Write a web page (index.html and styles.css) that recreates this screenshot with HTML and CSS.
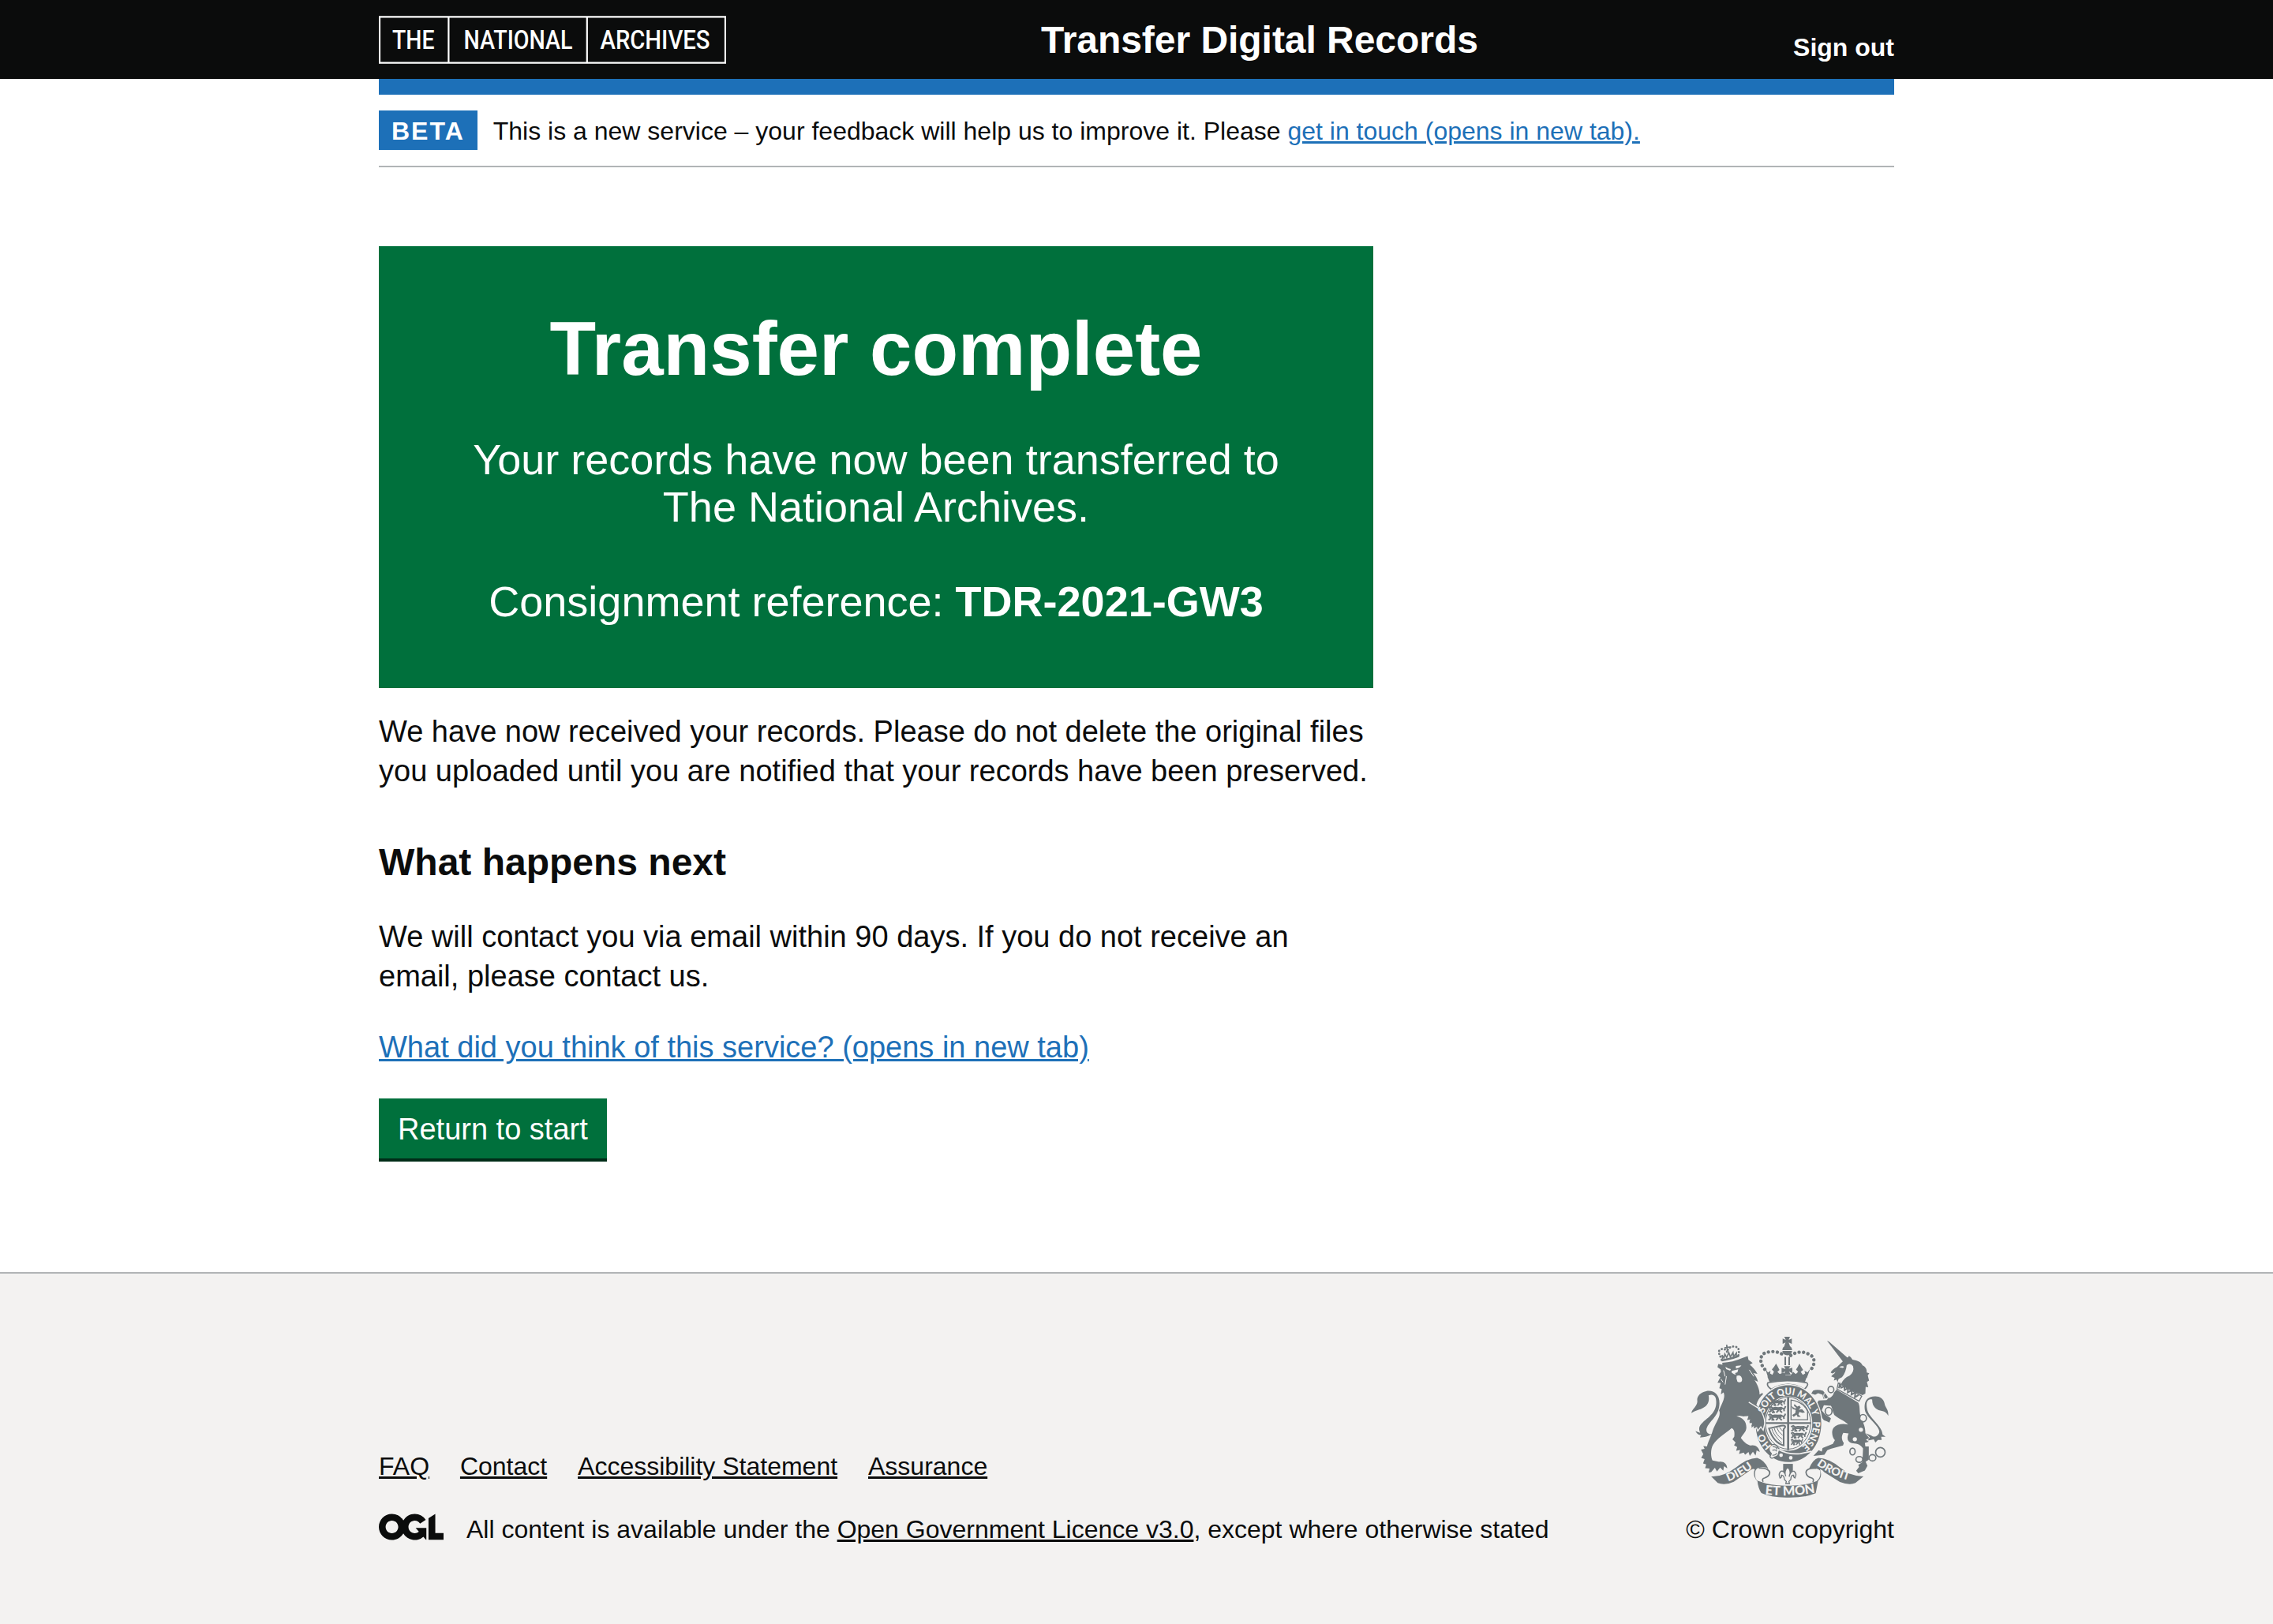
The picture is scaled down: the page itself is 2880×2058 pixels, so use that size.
FILE: index.html
```html
<!DOCTYPE html>
<html lang="en">
<head>
<meta charset="utf-8">
<title>Transfer complete - Transfer Digital Records</title>
<link rel="stylesheet" href="styles.css">
</head>
<body>
<header class="header">
  <div class="container header-row">
    <svg class="tna-logo" viewBox="0 0 440 62" role="img" aria-label="The National Archives">
      <path d="M1 1.4H439V59.7H1ZM88.4 1.4V59.7M263.8 1.4V59.7" fill="none" stroke="#fff" stroke-width="2.2"/>
      <g class="logo-text">
        <text x="17" y="42.2" textLength="53.5" lengthAdjust="spacingAndGlyphs">THE</text>
        <text x="107.5" y="42.2" textLength="138" lengthAdjust="spacingAndGlyphs">NATIONAL</text>
        <text x="280.5" y="42.2" textLength="139" lengthAdjust="spacingAndGlyphs">ARCHIVES</text>
      </g>
    </svg>
    <a class="service-name" href="#">Transfer Digital Records</a>
    <a class="sign-out" href="#">Sign out</a>
  </div>
</header>
<div class="container blue-bar"></div>
<div class="container phase-banner">
  <strong class="tag">BETA</strong>
  <span class="phase-text">This is a new service – your feedback will help us to improve it. Please <a class="link" href="#">get in touch (opens in new tab).</a></span>
</div>
<main class="container main">
  <div class="column">
    <div class="panel">
      <h1>Transfer complete</h1>
      <div class="panel-body">Your records have now been transferred to<br>The National Archives.<br><br>Consignment reference: <strong>TDR-2021-GW3</strong></div>
    </div>
    <p>We have now received your records. Please do not delete the original files you uploaded until you are notified that your records have been preserved.</p>
    <h2>What happens next</h2>
    <p>We will contact you via email within 90 days. If you do not receive an email, please contact us.</p>
    <p><a class="link" href="#">What did you think of this service? (opens in new tab)</a></p>
    <a class="button" href="#">Return to start</a>
  </div>
</main>
<footer class="footer">
  <div class="container footer-row">
    <div class="footer-meta">
      <ul class="footer-links">
        <li><a href="#">FAQ</a></li>
        <li><a href="#">Contact</a></li>
        <li><a href="#">Accessibility Statement</a></li>
        <li><a href="#">Assurance</a></li>
      </ul>
      <div class="licence">
        <svg class="ogl" viewBox="0 0 483.2 195.7"><path fill="currentColor" d="M421.5 142.8V.1l-50.7 32.3v161.1h112.4v-50.7zm-122.3-9.6A47.12 47.12 0 0 1 221 97.8c0-26 21.1-47.1 47.1-47.1 16.7 0 31.4 8.7 39.7 21.8l42.7-27.2A97.63 97.63 0 0 0 268.1 0c-36.5 0-68.3 20.1-85.1 49.7A98 98 0 0 0 97.8 0C43.9 0 0 43.9 0 97.8s43.9 97.8 97.8 97.8c36.5 0 68.3-20.1 85.1-49.7a97.76 97.76 0 0 0 149.6 25.4l19.4 22.2h3v-87.8h-80l24.3 27.5zM97.8 145c-26 0-47.1-21.1-47.1-47.1s21.1-47.1 47.1-47.1 47.1 21.1 47.1 47.1S123.8 145 97.8 145"/></svg>
        <span>All content is available under the <a href="#">Open Government Licence v3.0</a>, except where otherwise stated</span>
      </div>
    </div>
    <div class="copyright">
      <svg class="crest" viewBox="48 30 792 640" aria-hidden="true">
        <defs>
          <path id="garter-left" d="M375 458A97 108 0 0 1 339 385"/>
          <path id="garter-top" d="M346 334C357 289 397 263 437 263C480 263 519 291 532 352"/>
          <path id="garter-right" d="M532 364A96 107 0 0 1 482 465"/>
          <path id="ribbon-left" d="M209 593Q270 570 318 527"/>
          <path id="ribbon-mid" d="M349 642Q437 652 527 638"/>
          <path id="ribbon-right" d="M545 530Q603 573 680 592"/>
          <g id="lions" fill="none" stroke="currentColor" stroke-width="6" stroke-linejoin="round">
            <path d="M2 6l8-4 7 6 10-2 11 1 12-1 10 6 1 8M8 8l3 11-8 5M20 9l-3 8 6 7h-9M34 9l4 9-7 7M48 9l-3 9 8 7M58 14l6-8 2-6M12 13h40"/>
          </g>
        </defs>
        <g fill="currentColor">
          <!-- lion: crown -->
          <g fill="none" stroke="currentColor">
            <path d="M184 130C178 112 166 99 179 91C190 85 202 91 205 101C206 85 222 76 236 80C252 83 251 99 247 116" stroke-width="8" stroke-linecap="round" stroke-dasharray="1 11"/>
            <path d="M184 132Q214 128 249 115" stroke-width="8"/>
            <path d="M203 72l3 26M194 84l20-3M188 127l-3-15 8 10 3-14 7 13 8-19 6 17 10-17 2 15 11-13-1 17" stroke-width="5"/>
          </g>
          <!-- lion: head, mane, body and legs -->
          <path d="M168 158L171 146L187 149L186 141Q226 139 262 123L283 116L286 130L302 142L291 149C302 157 312 170 320 183L304 180C312 190 320 200 322 213L309 207C321 224 329 246 328 262L338 256L342 260C328 273 320 286 316 301L330 317C340 333 346 352 346 372L339 398L332 386L322 400L319 387L307 395L309 380L297 388L301 371L289 370L295 357L281 359L286 344L272 345C263 347 251 340 240 345C263 350 278 363 278 388C277 406 263 414 257 427C270 445 284 455 297 456C312 453 326 464 329 481L317 475L313 494L303 480L291 496L286 481L273 491L268 483L250 488L254 473L239 476L243 462L231 455L237 445L225 433L232 422C233 407 234 397 222 390C196 413 166 428 151 454C141 471 142 500 149 513L174 518C190 515 205 526 205 543L193 535L190 552L178 540L166 555L158 541L144 557L134 559L138 544L121 542L125 528L113 524L119 508L106 503L114 489L105 472L119 469L114 458L128 460C132 441 143 424 150 399C160 369 184 343 174 322C185 295 200 272 191 254L181 261L184 241L175 238L180 218L168 217L179 196L170 190L181 176L180 167Z"/>
          <!-- lion: tail -->
          <path d="M153 409C138 421 121 406 127 390C135 366 168 347 174 311C182 265 156 243 125 249C100 254 89 271 91 285C94 305 69 318 69 333C84 321 101 322 115 312C136 300 137 280 134 265C160 257 166 277 162 305C155 344 112 359 100 384C96 395 100 401 102 408L84 401C90 412 96 416 106 417L101 425C116 424 134 422 153 409Z"/>
        </g>
        <g fill="#f3f2f1">
          <path d="M198 156Q209 164 219 165L216 171L201 165ZM238 153L259 151Q253 162 238 163ZM222 172L247 166L244 177L235 180L238 187L230 184L222 179ZM241 191Q252 187 258 194Q265 205 259 213Q251 218 244 213Q238 202 241 191Z"/>
        </g>
        <path d="M191 170l6 23M181 203l8 12M289 168l17 25M202 192l-5 32" stroke="#f3f2f1" stroke-width="3" fill="none"/>

        <!-- royal crown -->
        <g fill="currentColor">
          <path d="M422 42h22l-5 12 12-5v20l-12-5 5 13h-22l5-13-11 5v-20l12 5ZM427 76h13q12 5 12 17h-37q0-12 12-17ZM415 96h37q-1 15-18 17q-18-2-19-17ZM423 119h6v31h-6ZM438 119h6v31h-6ZM421 154h25l-7 10 14-4v21l-13-7 7 12h-28l7-12-14 6v-20l15 5ZM358 194Q434 181 508 194L501 214Q435 204 366 214ZM350 163L360 178L370 172L368 182L377 187L383 175L375 167Q383 158 391 144Q399 158 404 168L396 176L405 184L419 178L428 189H446L456 176L466 184L475 176L467 167Q475 155 480 144Q487 158 494 168L485 176L493 187L502 182L499 172L511 177L521 164L508 199H361Z"/>
          <path d="M348 166C327 143 327 107 355 102C378 95 404 99 421 113M447 113C468 98 493 97 513 107C543 118 540 149 522 169" fill="none" stroke="currentColor" stroke-width="13" stroke-linecap="round" stroke-dasharray=".1 17"/>
          <path d="M360 217Q434 201 507 217Q516 222 506 234L499 242Q438 205 373 242Q353 229 360 217Z" fill="#f3f2f1" stroke="currentColor" stroke-width="5"/>
        </g>

        <!-- unicorn -->
        <g fill="currentColor">
          <path d="M585 57L593 61L662 121Q668 121 668 114Q678 120 682 129C701 132 717 139 720 151C734 157 737 169 736 178L746 181L740 189L745 209L737 214L742 234L732 233L731 258L720 264Q676 248 638 222Q648 199 671 190Q690 175 684 154Q675 140 660 150Q657 178 642 196L629 203L625 215L621 205L611 209L614 198L601 193L608 185L599 178Q605 166 623 157Q635 145 645 136Z"/>
          <path d="M621 243Q663 267 704 293C713 310 705 330 716 353C724 373 731 385 731 409L746 428L733 434L744 442L729 446L731 460H744V510L732 518L739 533L729 551L704 562L696 552L707 538L704 530L720 519L722 467C711 449 693 449 679 447C663 444 659 428 667 410L647 408C639 421 640 434 649 447L646 456L599 469L586 474L575 491L533 496L553 474L565 479L568 466L607 450L615 436C605 425 600 402 610 388C624 373 648 372 665 376C655 363 634 358 613 340C605 325 606 314 600 305L573 303L565 322L578 338L593 347L600 353L594 369L585 364L573 360L557 339L552 315L545 298L553 285L583 283L590 277L571 278L568 263L551 257L540 263L525 258L532 247Q548 240 570 248L582 263L592 276Q608 269 611 255Z"/>
          <path d="M733 409L748 425L740 437L763 433L769 445L779 435H793L791 423L808 423L796 414C798 384 743 349 738 319C731 290 741 277 757 281C756 307 772 318 784 322C804 325 812 330 818 343C820 317 806 312 804 296C800 276 784 268 767 269C738 270 724 288 729 321C735 352 786 381 784 405C780 423 762 426 754 418Z"/>
        </g>
        <path d="M650 158Q645 150 631 158L644 161ZM598 183Q608 183 617 176Q613 187 600 188Z" fill="#f3f2f1"/>
        <path d="M628 218L717 268L707 287L623 241Z" fill="#f3f2f1" stroke="currentColor" stroke-width="4"/>
        <path d="M630 238l4-15 5 13 12-6 1 15 13-8-1 17 16-9-2 17 15-8-2 18 14-8" fill="none" stroke="currentColor" stroke-width="6"/>
        <!-- unicorn: chain -->
        <g fill="none" stroke="currentColor" stroke-width="5">
          <ellipse cx="600" cy="243" rx="11" ry="12"/><ellipse cx="581" cy="267" rx="9" ry="12" stroke="#f3f2f1" stroke-width="3"/><ellipse cx="591" cy="326" rx="13" ry="15"/><ellipse cx="722" cy="352" rx="13" ry="14"/><ellipse cx="682" cy="479" rx="10" ry="13"/><ellipse cx="708" cy="509" rx="13" ry="11"/><ellipse cx="758" cy="503" rx="13" ry="12"/><circle cx="788" cy="482" r="18"/>
        </g>
        <g fill="#f3f2f1"><circle cx="714" cy="396" r="8"/><circle cx="691" cy="432" r="8"/><circle cx="721" cy="352" r="9"/></g>

        <!-- garter and arms -->
        <path d="M437 222C510 222 567 286 567 371C567 458 511 523 438 523C365 523 309 458 309 371C309 286 365 222 437 222Z" fill="#f3f2f1"/>
        <path d="M437 227C508 227 563 288 563 371C563 456 508 519 438 519C367 519 313 456 313 371C313 288 367 227 437 227ZM437 269C386 269 348 313 348 370C348 435 387 476 438 476C490 476 529 433 529 371C529 313 489 269 437 269Z" fill="currentColor" fill-rule="evenodd"/>
        <ellipse cx="437" cy="371" rx="86" ry="99" fill="none" stroke="currentColor" stroke-width="3"/>
        <path d="M433 273h8v201h-8ZM351 367h173v7H351Z" fill="currentColor"/>
        <use href="#lions" transform="translate(370 280) scale(.86 .95)"/>
        <use href="#lions" transform="translate(361 306) scale(1 .98)"/>
        <use href="#lions" transform="translate(359 335) scale(1.02 .98)"/>
        <use href="#lions" transform="translate(446 379) scale(1.02 .9)"/>
        <use href="#lions" transform="translate(446 405) scale(.9 .9)"/>
        <use href="#lions" transform="translate(446 431) scale(.7 .9)"/>
        <path d="M448 283V358H511V325Q497 291 448 283Z" fill="none" stroke="currentColor" stroke-width="4"/>
        <path d="M461 298l11 10 8-4 5 8-8 8 13-2 11 12-9 2-12-4-4 10 9 9h-12l-4-8-11 8-6-7 12-7 2-12-12-4-4-11 12 9 7-2-10-8Z" fill="currentColor"/>
        <path d="M364 391L410 381Q427 378 426 386L420 394V456Q381 445 364 391Z" fill="none" stroke="currentColor" stroke-width="6"/>
        <path d="M375 392q5 24 38 55M384 390q6 25 31 42M394 388q4 16 22 29M404 386q3 8 13 15" fill="none" stroke="currentColor" stroke-width="3"/>
        <!-- lion forepaw over the garter -->
        <path d="M286 291L329 318C341 337 348 357 346 375L342 396L333 383L321 399L317 386L306 392L307 378L297 383L301 366L289 366L299 340Z" fill="currentColor"/>
        <path d="M287 291L330 318C342 337 349 357 347 375L342 398L333 385L321 401L317 388L306 394" fill="none" stroke="#f3f2f1" stroke-width="4"/>
        <!-- buckle -->
        <path d="M365 466Q370 453 382 452Q395 454 397 464Q408 470 401 482Q401 497 384 501Q372 509 368 498L373 487Q363 477 365 466Z" fill="#f3f2f1" stroke="currentColor" stroke-width="4"/>
        <path d="M378 461q16-2 16 10M377 474q12-4 17 4M377 493q13 0 17-8" fill="none" stroke="currentColor" stroke-width="4"/>
        <circle cx="410" cy="493" r="7" fill="#f3f2f1"/><circle cx="447" cy="503" r="7" fill="#f3f2f1"/>
        <path d="M400 471Q436 492 484 487L526 478" fill="none" stroke="#f3f2f1" stroke-width="5"/>

        <!-- ribbon -->
        <path d="M144 574Q188 577 238 540Q281 504 319 503Q348 512 362 545Q348 534 321 542Q306 551 313 580Q317 591 328 593Q375 611 436 609Q501 610 545 592Q563 578 559 552Q550 541 517 543Q531 509 552 503Q594 505 635 540Q675 574 724 574L693 599Q670 609 634 595L575 558Q567 547 558 546Q569 574 551 591L542 638Q502 655 436 654Q371 655 335 637Q323 620 320 592Q300 572 310 547Q303 541 285 556L230 594Q196 610 169 599Z" fill="currentColor"/>
        <path d="M322 546Q347 534 361 554Q369 576 343 584L332 589Q311 579 315 557ZM549 546Q513 537 509 558Q506 575 529 583L544 589Q563 572 556 550Z" fill="#f3f2f1"/>
        <path d="M325 542Q365 540 367 561Q365 574 347 580Q335 583 342 594M544 543Q505 541 505 559Q507 575 527 580Q537 584 531 595" fill="none" stroke="currentColor" stroke-width="5"/>
        <path d="M418 526h37v34h-37Z" fill="currentColor"/>
        <path d="M435 538Q450 554 442 569L441 575Q446 552 459 554Q472 563 463 580Q456 575 458 569Q448 567 447 586L440 593L442 601H428L430 593L423 586Q421 568 411 569Q414 577 406 580Q398 563 410 554Q423 551 428 573Q420 555 435 538Z" fill="#f3f2f1" stroke="currentColor" stroke-width="4"/>
        <g class="motto">
          <text><textPath href="#garter-left">HO</textPath></text>
          <text textLength="258" lengthAdjust="spacingAndGlyphs"><textPath href="#garter-top">SOIT QUI MAL Y</textPath></text>
          <text textLength="110" lengthAdjust="spacingAndGlyphs"><textPath href="#garter-right">PENSE</textPath></text>
          <g class="motto-large">
            <text textLength="108" lengthAdjust="spacingAndGlyphs"><textPath href="#ribbon-left">DIEU</textPath></text>
            <text class="motto-mid"><textPath href="#ribbon-mid">ET MON</textPath></text>
            <text textLength="136" lengthAdjust="spacingAndGlyphs"><textPath href="#ribbon-right">DROIT</textPath></text>
          </g>
        </g>
      </svg>
      <span>© Crown copyright</span>
    </div>
  </div>
</footer>
</body>
</html>
```
FILE: styles.css
```css
* { box-sizing: border-box; }
body {
  margin: 0;
  min-height: 2058px;
  display: flex;
  flex-direction: column;
  background: #fff;
  color: #0b0c0c;
  font-family: "Liberation Sans", Arial, sans-serif;
  font-size: 38px;
  line-height: 50px;
}
a { color: inherit; text-underline-offset: auto; }
.link { color: #1d70b8; }
.container { width: 1920px; margin: 0 auto; }

.header { background: #0b0c0c; color: #fff; height: 100px; }
.header a { text-decoration: none; font-weight: bold; }
.header-row { display: flex; align-items: flex-start; }
.tna-logo { width: 440px; height: 62px; margin-top: 20px; flex: none; }
.logo-text { fill: #fff; font: 500 33.6px Roboto, sans-serif; }
.service-name { margin: 21px 0 0 399px; font-size: 48px; line-height: 60px; letter-spacing: -0.04px; }
.sign-out { margin: 40px 0 0 auto; font-size: 32px; line-height: 40px; }
.blue-bar { height: 20px; background: #1d70b8; }

.phase-banner {
  display: flex;
  align-items: center;
  gap: 20px;
  height: 92px;
  border-bottom: 2px solid #b1b4b6;
  font-size: 32px;
  line-height: 40px;
}
.phase-text { padding-top: 2px; }
.tag {
  padding: 10px 16px 8px;
  background: #1d70b8;
  color: #fff;
  line-height: 32px;
  letter-spacing: 2px;
}

.main { height: 1400px; padding-top: 100px; }
.column { width: 1260px; }
.panel {
  height: 560px;
  margin-bottom: 30px;
  padding: 80px;
  background: #00703c;
  color: #fff;
  text-align: center;
}
.panel h1 { margin: 0 0 60px; font-size: 96px; line-height: 100px; }
.panel-body { font-size: 54px; line-height: 60px; }
p { margin: 0 0 40px; }
h2 { margin: 61px 0 39px; font-size: 48px; line-height: 60px; }
.button {
  display: inline-block;
  height: 76px;
  padding: 14px 24px 12px;
  background: #00703c;
  box-shadow: 0 4px 0 #002d18;
  color: #fff;
  text-decoration: none;
}

.footer {
  flex: 1;
  padding-top: 76px;
  border-top: 2px solid #b1b4b6;
  background: #f3f2f1;
  font-size: 32px;
  line-height: 40px;
}
.footer-row { display: flex; justify-content: space-between; align-items: flex-end; }
.footer-links { display: flex; gap: 38.9px; margin: 0 0 40px; padding: 0; list-style: none; }
.licence { display: flex; gap: 29px; }
.ogl { width: 82px; height: 34px; flex: none; }
.copyright { display: flex; flex-direction: column; align-items: flex-end; gap: 15px; }
.crest { width: 264px; height: 213px; color: #6f777b; }
.motto { fill: #f3f2f1; font: 900 37px Lato, sans-serif; }
.motto-large { font-size: 42px; }
.motto-mid { font-size: 49px; }
```
